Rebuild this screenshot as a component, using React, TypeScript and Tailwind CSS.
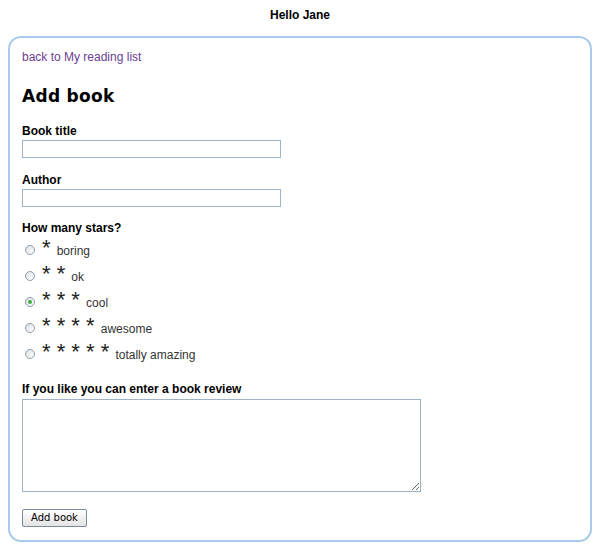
import React, { useState } from 'react';

const options = [
  { stars: 1, label: 'boring' },
  { stars: 2, label: 'ok' },
  { stars: 3, label: 'cool' },
  { stars: 4, label: 'awesome' },
  { stars: 5, label: 'totally amazing' },
];

const App: React.FC = () => {
  const [rating, setRating] = useState(3);

  return (
    <div className="min-h-[549px] bg-white text-black font-['Liberation_Sans',Arial,sans-serif] text-[12px]">
      {/* Header */}
      <div className="pt-[8px] h-[28px] text-center font-bold text-[12px] leading-[14px]">Hello Jane</div>

      {/* Form panel */}
      <div className="mx-[8px] mt-[8px] w-[584px] h-[506px] border-2 border-[#a7c9ee] rounded-[13px] px-[12px] pt-[12px]">
        <a href="#" className="block text-[#6a3d91] leading-[15px] hover:underline">back to My reading list</a>

        <h1 className="mt-[20px] text-[17px] leading-[22px] font-bold tracking-[0.3px] font-['DejaVu_Sans',sans-serif]">Add book</h1>

        <div className="mt-[17px]">
          <label className="block font-bold leading-[14px]">Book title</label>
          <input type="text" className="block mt-[2px] w-[259px] h-[18px] border border-[#9fb3c6] bg-white outline-none" />
        </div>

        <div className="mt-[15px]">
          <label className="block font-bold leading-[14px]">Author</label>
          <input type="text" className="block mt-[2px] w-[259px] h-[18px] border border-[#9fb3c6] bg-white outline-none" />
        </div>

        <div className="mt-[14px]">
          <div className="font-bold leading-[14px]">How many stars?</div>
          <div className="flex flex-col">
            {options.map(o => (
              <label key={o.stars} className="flex items-start h-[26px] cursor-pointer" onClick={() => setRating(o.stars)}>
                <span className="mt-[10px] ml-[3px] w-[10px] h-[10px] rounded-full border border-[#8d9aa6] bg-gradient-to-br from-[#dde1e5] to-white flex items-center justify-center shrink-0">
                  {rating === o.stars && <span className="w-[4px] h-[4px] rounded-full bg-[#3fae3f]" />}
                </span>
                <span className="ml-[7px] leading-[26px] whitespace-pre text-[#333]">
                  <span className="text-[22px] leading-[26px] text-[#222]">{'* '.repeat(o.stars)}</span>
                  <span className="text-[12px]">{o.label}</span>
                </span>
              </label>
            ))}
          </div>
        </div>

        <div className="mt-[17px]">
          <label className="block font-bold leading-[14px]">If you like you can enter a book review</label>
          <textarea className="block mt-[3px] w-[399px] h-[93px] border border-[#9fb3c6] bg-white outline-none resize" />
        </div>

        <button className="mt-[17px] h-[18px] px-[8px] border border-[#7b8b9c] rounded-[2px] bg-gradient-to-b from-white to-[#e3e3e3] text-[10px] leading-[14px] font-['DejaVu_Sans',sans-serif]">
          Add book
        </button>
      </div>
    </div>
  );
};

export default App;
